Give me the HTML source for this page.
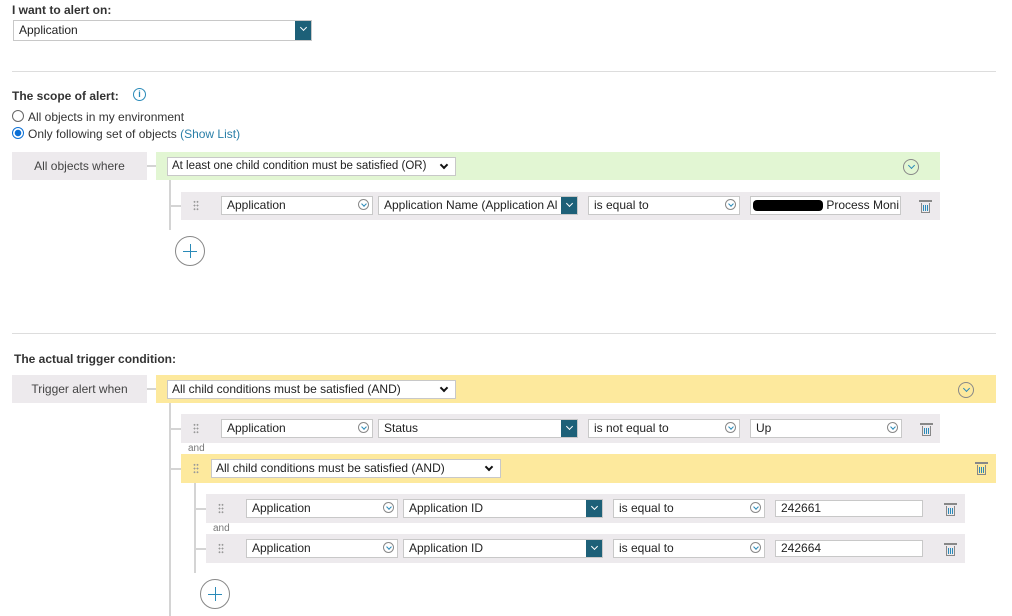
<!DOCTYPE html><html><head><style>
body{margin:0;width:1012px;height:616px;background:#fff;font-family:"Liberation Sans",sans-serif;position:relative;overflow:hidden;color:#222}
.a{position:absolute}
.b{font-weight:bold;font-size:12px;color:#333}
.t{font-size:12px;color:#333}
.sel{position:absolute;height:19px;border:1px solid #c8c8c8;background:#fff;box-sizing:border-box;font-size:12px;line-height:17px;padding-left:5px;color:#222;white-space:nowrap;overflow:hidden}
.cc{position:absolute;right:3px;top:2px;width:11px;height:11px;border:1px solid #888;border-radius:50%;box-sizing:border-box}
.cc:after{content:"";position:absolute;left:2.5px;top:1.5px;width:3px;height:3px;border-right:1px solid #2a8ab8;border-bottom:1px solid #2a8ab8;transform:rotate(45deg)}
.tb{position:absolute;right:-1px;top:-1px;width:17px;height:19px;background:#1d6078}
.tb:after{content:"";position:absolute;left:6px;top:5px;width:4px;height:4px;border-right:1px solid #fff;border-bottom:1px solid #fff;transform:rotate(45deg)}
.grey{position:absolute;background:#edeaed}
.lbl{position:absolute;background:#edeaed;font-size:12px;color:#444;text-align:center;line-height:28px;width:135px;height:28px;left:12px}
.drag{position:absolute;width:6px;height:11px;background-image:radial-gradient(circle,#999 0.8px,transparent 1px);background-size:3px 3.7px}
.trash{position:absolute;width:9px;height:10px;border:1px solid #888;border-top:none;box-sizing:border-box}
.trash:before{content:"";position:absolute;left:-3px;top:-3px;width:13px;height:1.5px;background:#888}
.trash:after{content:"";position:absolute;left:1px;top:2px;width:5px;height:6px;background:repeating-linear-gradient(90deg,#2a8ab8 0 1px,transparent 1px 2px)}
.big{position:absolute;width:16px;height:16px;border:1.3px solid #888;border-radius:50%;box-sizing:border-box}
.big:after{content:"";position:absolute;left:4.5px;top:3px;width:4px;height:4px;border-right:1.5px solid #2a8ab8;border-bottom:1.5px solid #2a8ab8;transform:rotate(45deg)}
.plus{position:absolute;width:30px;height:30px;border:1.3px solid #888;border-radius:50%;box-sizing:border-box;background:linear-gradient(#2a8ab8,#2a8ab8) center/14px 1px no-repeat,linear-gradient(#2a8ab8,#2a8ab8) center/1px 14px no-repeat}
.hr{position:absolute;left:12px;width:984px;height:1px;background:#ddd}
.vl{position:absolute;width:2px;background:#d4d4d4}
.hl{position:absolute;height:2px;background:#d4d4d4}
.and{position:absolute;font-size:10px;color:#777}
.ns{position:absolute;height:19px;border:1px solid #c8c8c8;background:#fff;box-sizing:border-box;font-size:12px;line-height:17px;padding-left:4px;white-space:nowrap;overflow:hidden}
.nv:after{content:"";position:absolute;right:8px;top:4px;width:4px;height:4px;border-right:2px solid #111;border-bottom:2px solid #111;transform:rotate(45deg)}
</style></head><body>
<div class="a b" style="left:12px;top:3px">I want to alert on:</div>
<div class="sel" style="left:13px;top:20px;width:299px;height:21px;line-height:19px">Application<div class="tb" style="height:21px"></div></div>
<div class="hr" style="top:71px"></div>
<div class="a b" style="left:12px;top:89px">The scope of alert:</div>
<div class="a" style="left:133px;top:88px;width:13px;height:13px;border:1.3px solid #2a8ab8;border-radius:50%;box-sizing:border-box;color:#2a8ab8;font-size:9px;text-align:center;line-height:11px;font-weight:bold">i</div>
<div class="a" style="left:12px;top:110px;width:12px;height:12px;border:1px solid #666;border-radius:50%;box-sizing:border-box"></div>
<div class="a t" style="left:28px;top:110px">All objects in my environment</div>
<div class="a" style="left:12px;top:127px;width:12px;height:12px;border:1px solid #0a6fd6;border-radius:50%;box-sizing:border-box;background:radial-gradient(circle,#0a6fd6 3px,#fff 3.5px)"></div>
<div class="a t" style="left:28px;top:127px">Only following set of objects <span style="color:#2a7fa8">(Show List)</span></div>

<div class="lbl" style="top:152px">All objects where</div>
<div class="hl" style="left:147px;top:165px;width:20px"></div>
<div class="a" style="left:156px;top:152px;width:784px;height:28px;background:#e2f6d3"></div>
<div class="ns nv" style="left:167px;top:157px;width:289px;font-size:11.5px">At least one child condition must be satisfied (OR)</div>
<div class="big" style="left:903px;top:159px"></div>
<div class="vl" style="left:169px;top:180px;height:50px"></div>
<div class="hl" style="left:170px;top:205px;width:12px"></div>
<div class="grey" style="left:181px;top:192px;width:759px;height:28px"></div>
<div class="drag" style="left:193px;top:200px"></div>
<div class="sel" style="left:221px;top:196px;width:152px">Application<div class="cc"></div></div>
<div class="sel" style="left:378px;top:196px;width:200px">Application Name (Application Al<div class="tb"></div></div>
<div class="sel" style="left:588px;top:196px;width:152px">is equal to<div class="cc"></div></div>
<div class="sel" style="left:750px;top:196px;width:151px;padding-left:2px"><span style="display:inline-block;width:70px;height:11px;background:#000;border-radius:4px;vertical-align:middle"></span> Process Moni</div>
<div class="trash" style="left:921px;top:203px"></div>
<div class="plus" style="left:175px;top:236px"></div>

<div class="hr" style="top:333px"></div>
<div class="a b" style="left:14px;top:352px">The actual trigger condition:</div>
<div class="lbl" style="top:375px">Trigger alert when</div>
<div class="hl" style="left:147px;top:388px;width:10px"></div>
<div class="a" style="left:156px;top:375px;width:840px;height:28px;background:#fde99d"></div>
<div class="ns nv" style="left:167px;top:380px;width:289px">All child conditions must be satisfied (AND)</div>
<div class="big" style="left:958px;top:382px"></div>
<div class="vl" style="left:169px;top:403px;height:213px"></div>
<div class="hl" style="left:170px;top:428px;width:12px"></div>
<div class="grey" style="left:181px;top:414px;width:759px;height:29px"></div>
<div class="drag" style="left:193px;top:423px"></div>
<div class="sel" style="left:221px;top:419px;width:152px">Application<div class="cc"></div></div>
<div class="sel" style="left:378px;top:419px;width:200px">Status<div class="tb"></div></div>
<div class="sel" style="left:588px;top:419px;width:152px">is not equal to<div class="cc"></div></div>
<div class="sel" style="left:750px;top:419px;width:152px">Up<div class="cc"></div></div>
<div class="trash" style="left:922px;top:426px"></div>
<div class="and" style="left:188px;top:443px">and</div>
<div class="hl" style="left:170px;top:468px;width:12px"></div>
<div class="a" style="left:181px;top:454px;width:815px;height:29px;background:#fde99d"></div>
<div class="drag" style="left:193px;top:463px"></div>
<div class="ns nv" style="left:211px;top:459px;width:290px">All child conditions must be satisfied (AND)</div>
<div class="trash" style="left:977px;top:465px"></div>
<div class="vl" style="left:194px;top:483px;height:90px"></div>
<div class="hl" style="left:195px;top:508px;width:12px"></div>
<div class="grey" style="left:206px;top:494px;width:759px;height:29px"></div>
<div class="drag" style="left:218px;top:503px"></div>
<div class="sel" style="left:246px;top:499px;width:152px">Application<div class="cc"></div></div>
<div class="sel" style="left:403px;top:499px;width:200px">Application ID<div class="tb"></div></div>
<div class="sel" style="left:613px;top:499px;width:152px">is equal to<div class="cc"></div></div>
<div class="sel" style="left:775px;top:500px;width:148px;height:17px;line-height:15px">242661</div>
<div class="trash" style="left:946px;top:506px"></div>
<div class="and" style="left:213px;top:523px">and</div>
<div class="hl" style="left:195px;top:548px;width:12px"></div>
<div class="grey" style="left:206px;top:534px;width:759px;height:29px"></div>
<div class="drag" style="left:218px;top:543px"></div>
<div class="sel" style="left:246px;top:539px;width:152px">Application<div class="cc"></div></div>
<div class="sel" style="left:403px;top:539px;width:200px">Application ID<div class="tb"></div></div>
<div class="sel" style="left:613px;top:539px;width:152px">is equal to<div class="cc"></div></div>
<div class="sel" style="left:775px;top:540px;width:148px;height:17px;line-height:15px">242664</div>
<div class="trash" style="left:946px;top:546px"></div>
<div class="plus" style="left:200px;top:579px"></div>
</body></html>
